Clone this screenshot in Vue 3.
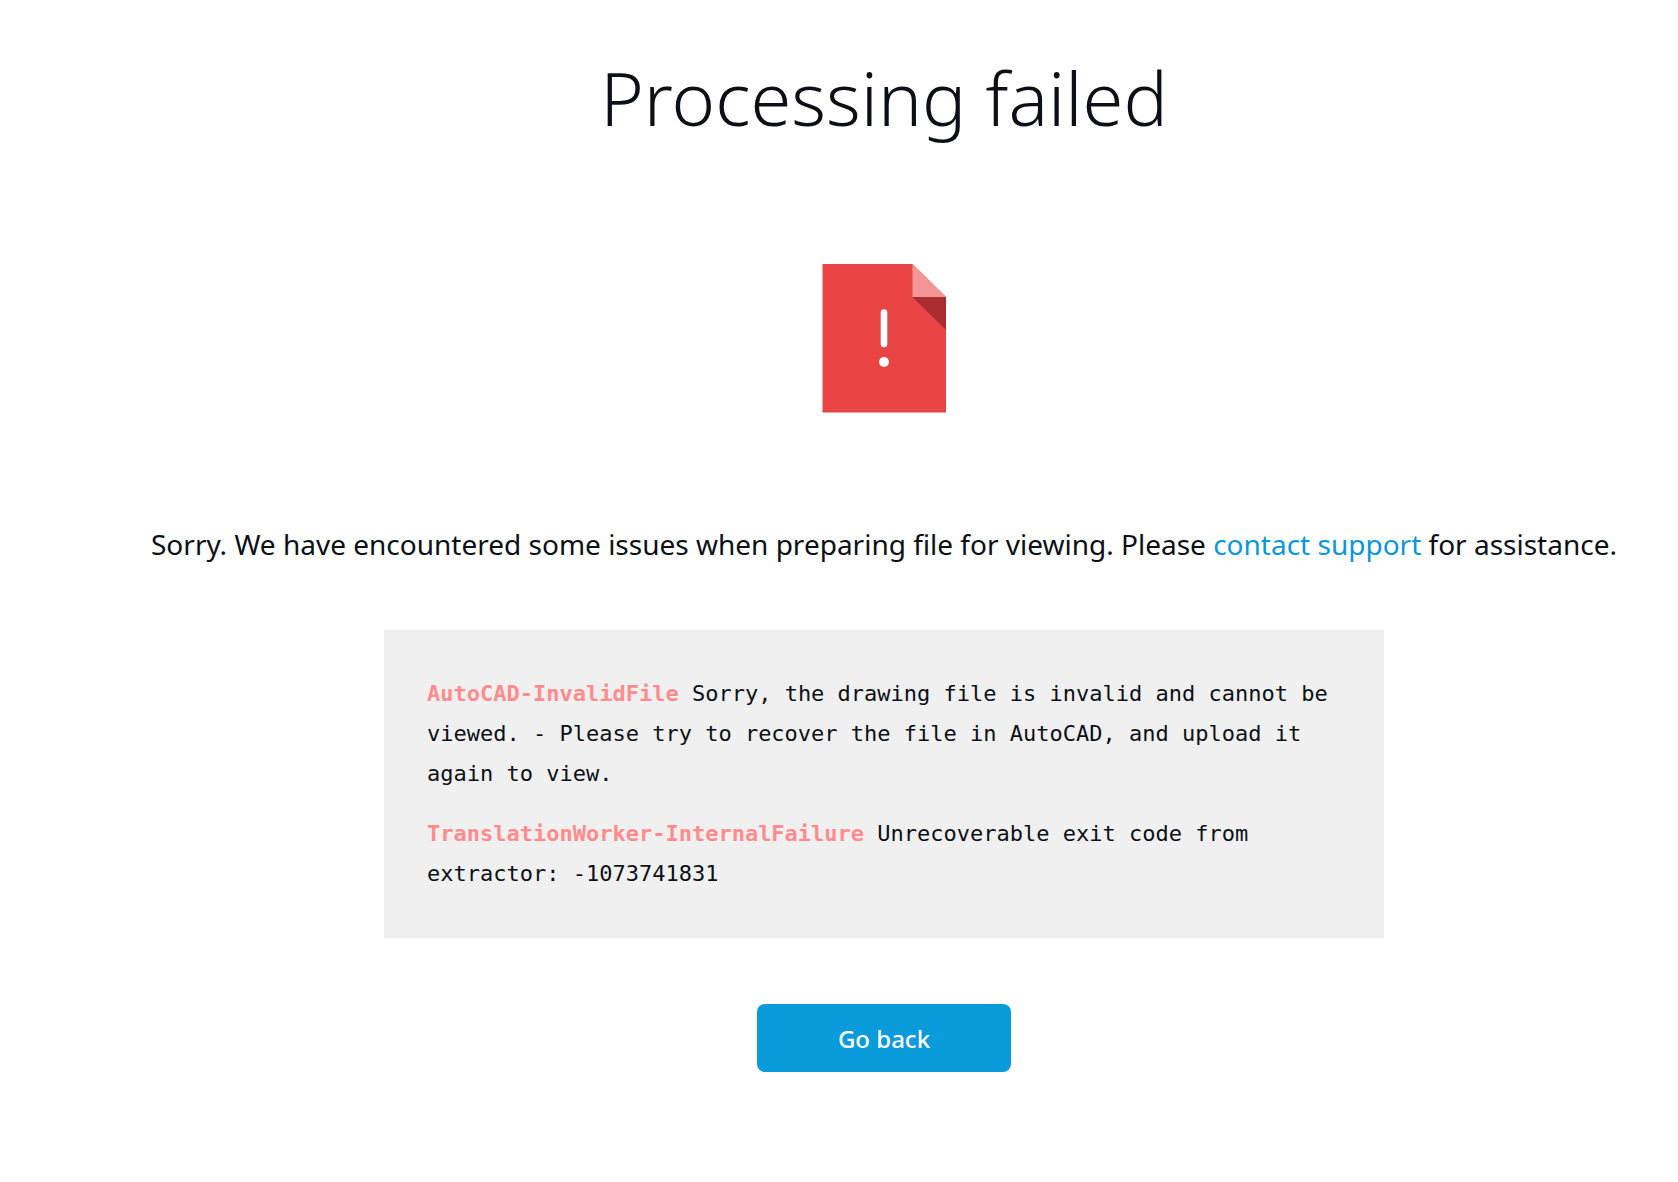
<script setup>
const errors = [
  {
    code: 'AutoCAD-InvalidFile',
    message: 'Sorry, the drawing file is invalid and cannot be viewed. - Please try to recover the file in AutoCAD, and upload it again to view.',
  },
  {
    code: 'TranslationWorker-InternalFailure',
    message: 'Unrecoverable exit code from extractor: -1073741831',
  },
]
</script>

<template>
  <main class="page">
    <h1 class="title">Processing failed</h1>
    <svg class="file-icon" viewBox="0 0 124 149" role="img" aria-label="File error">
      <path d="M0.500 0H90.500L124 33V148.500H0.500Z" fill="#e84444" />
      <path d="M90.500 0L124 33H90.500Z" fill="#f29795" />
      <path d="M90.500 33H124V66Z" fill="#ab2c30" />
      <path d="M62 48.500V80" stroke="#fff" stroke-width="6.600" stroke-linecap="round" />
      <circle cx="62" cy="98" r="5" fill="#fff" />
    </svg>
    <p class="lead">
      Sorry. We have encountered some issues when preparing file for viewing. Please
      <a class="link" href="#support">contact support</a> for assistance.
    </p>
    <section class="errors">
      <p v-for="error in errors" :key="error.code" class="error">
        <strong class="code">{{ error.code }}</strong> {{ error.message }}
      </p>
    </section>
    <button class="back" type="button">Go back</button>
  </main>
</template>

<style>
body {
  background: #fff;
}
</style>

<style scoped>
.page {
  display: flex;
  flex-direction: column;
  align-items: center;
  box-sizing: border-box;
  padding: 48px 0 80px 90px;
  font-family: "Noto Sans", sans-serif;
  color: #0c1016;
}
.title {
  margin: 0;
  font-size: 74px;
  line-height: 100px;
  font-weight: 300;
}
.file-icon {
  width: 124px;
  height: 149px;
  margin-top: 116px;
}
.lead {
  margin: 111px 0 0;
  font-size: 28px;
  line-height: 40px;
  white-space: nowrap;
}
.link {
  color: #0a97d9;
  text-decoration: none;
}
.errors {
  box-sizing: border-box;
  width: 1000px;
  max-width: 100%;
  margin-top: 66px;
  padding: 44px 43px;
  background: #f0f0f0;
  font-family: "DejaVu Sans Mono", monospace;
  font-size: 22px;
  line-height: 40px;
}
.error {
  margin: 0;
}
.error + .error {
  margin-top: 20px;
}
.code {
  color: #ff8c8c;
}
.back {
  width: 254px;
  height: 68px;
  margin-top: 66px;
  border: 0;
  border-radius: 8px;
  background: #0a9bdc;
  color: #fff;
  font-family: inherit;
  font-size: 24px;
  font-weight: 500;
}
</style>
